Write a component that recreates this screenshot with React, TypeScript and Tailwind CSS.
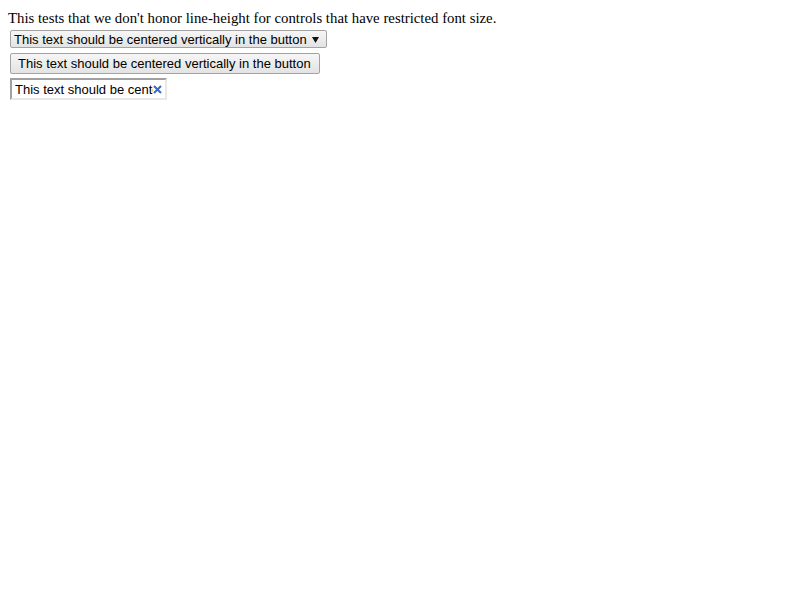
export default function App() {
  const label = "This text should be centered vertically in the button";
  return (
    <div className="min-h-screen bg-white px-2 pt-2 text-black" style={{ fontFamily: '"Liberation Serif", serif' }}>
      <div className="text-[14.8px] leading-[20px]">
        This tests that we don't honor line-height for controls that have restricted font size.
      </div>
      <div className="flex flex-col items-start pt-[2px] pl-[2px] font-['Liberation_Sans',Arial,sans-serif] text-[13px] leading-[16px]">
        <div className="flex h-[18px] items-center gap-[5px] rounded-[2px] border border-[#a3a3a3] bg-gradient-to-b from-[#f6f6f6] to-[#e3e3e3] pl-[3px] pr-[7px]">
          <span className="pt-[1px]">{label}</span>
          <svg width="7" height="6" viewBox="0 0 7 6" className="mt-[1px]">
            <path d="M0 0 H7 L3.5 6 Z" fill="#111" />
          </svg>
        </div>
        <div className="mt-[5px] flex h-[21px] items-center rounded-[2px] border border-[#a3a3a3] bg-gradient-to-b from-[#f6f6f6] to-[#e3e3e3] pl-[7px] pr-[8px] pt-[1px]">
          {label}
        </div>
        <div className="mt-[4px] flex h-[22px] w-[157px] items-center overflow-hidden border-2 border-b-[#e8e8e8] border-l-[#a0a0a0] border-r-[#e8e8e8] border-t-[#a0a0a0] bg-white pl-[3px]">
          <span className="w-[138px] shrink-0 overflow-hidden whitespace-nowrap pt-[1px]">{label}</span>
          <svg width="9" height="9" viewBox="0 0 9 9">
            <path d="M1 1 L8 8 M8 1 L1 8" stroke="#3b6bbd" strokeWidth="2" />
          </svg>
        </div>
      </div>
    </div>
  );
}
